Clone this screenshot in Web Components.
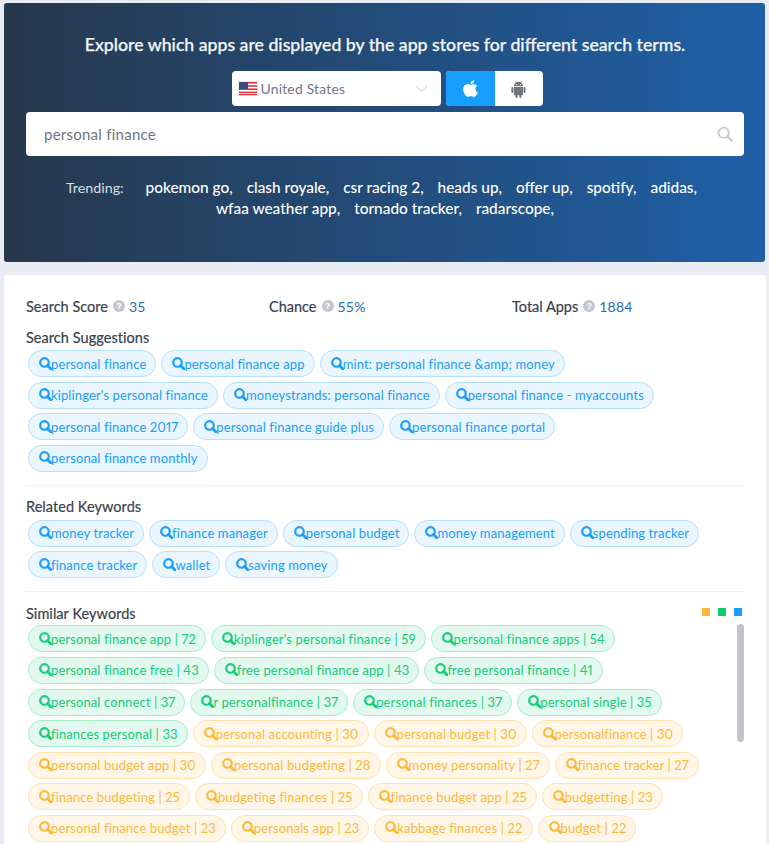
<!DOCTYPE html>
<html><head><meta charset="utf-8">
<style>
html,body{margin:0;padding:0;height:844px;overflow:hidden;background:#e9edf3;font-family:"Lato","Liberation Sans",sans-serif}
</style></head><body>
<app-page></app-page>
<script>
const SEARCH='<svg viewBox="0 0 14 14" width="13" height="13" fill="none" stroke="currentColor"><circle cx="5.9" cy="5.9" r="4.6" stroke-width="2.4"/><path d="M9.2 9.2L12.9 12.9" stroke-width="3" stroke-linecap="round"/></svg>';
class KwTag extends HTMLElement{
  constructor(){super();const s=this.attachShadow({mode:'open'});
  s.innerHTML=`<style>
  :host{display:inline-flex;align-items:center;box-sizing:border-box;height:27px;padding:0 9px 0 10px;border-radius:14px;border:1px solid var(--b);background:var(--bg);color:var(--c);font-size:13px;letter-spacing:.115px;font-variant-numeric:proportional-nums;white-space:nowrap;--b:#b5e0fd;--bg:#e9f6ff;--c:#1a9dfb}
  :host([tone=green]){--b:#a6ecc9;--bg:#e3f9ef;--c:#12cf78}
  :host([tone=orange]){--b:#ffe2ad;--bg:#fff6e7;--c:#fdb93c}
  svg{display:block;flex:none;margin:-1px -1px 0 0}
  </style>${SEARCH}<slot></slot>`}
}
customElements.define('kw-tag',KwTag);
class TagList extends HTMLElement{
  constructor(){super();const s=this.attachShadow({mode:'open'});
  s.innerHTML=`<style>:host{display:flex;flex-wrap:wrap;gap:4.6px 5px;padding:0 0 0 2px;width:708px}</style><slot></slot>`}
}
customElements.define('tag-list',TagList);
class StatItem extends HTMLElement{
  constructor(){super();const s=this.attachShadow({mode:'open'});
  s.innerHTML=`<style>:host{display:flex;align-items:center;box-sizing:border-box;padding-top:2px;height:20px;font-size:14.5px;color:#39424e;white-space:nowrap}
  i{display:inline-flex;width:12px;height:12px;border-radius:50%;background:#c3c7cc;color:#fff;font:700 9px/12px "Liberation Sans",sans-serif;align-items:center;justify-content:center;margin:0 4px 0 5px}
  b{font-weight:400;color:#2a6db0;font-size:14px;letter-spacing:.2px}
  span{font-weight:400;-webkit-text-stroke:.2px #39424e}</style><span><slot></slot></span><i>?</i><b></b>`;}
  connectedCallback(){this.shadowRoot.querySelector('b').textContent=this.getAttribute('value')}
}
customElements.define('stat-item',StatItem);
class HeroPanel extends HTMLElement{
  constructor(){super();const s=this.attachShadow({mode:'open'});
  s.innerHTML=`<style>
  :host{display:block;box-sizing:border-box;height:259px;margin:3px 4px 0 4px;border-radius:3px;background:linear-gradient(90deg,#27384c 0%,#1f60a8 100%);padding:31px 21px 0 22px;color:#fff}
  h1{margin:0;height:22px;font-size:17.7px;line-height:22px;font-weight:500;text-align:center;color:#f4f6f8;-webkit-text-stroke:.25px #f4f6f8}
  .ctl{display:flex;justify-content:center;gap:5px;margin-top:15px;height:35px;padding-left:4px}
  .sel{box-sizing:border-box;width:209px;height:35px;background:#fff;border-radius:4px;display:flex;align-items:center;padding:0 13px 0 6px;color:#6e7784;font-size:13.8px;letter-spacing:.25px;gap:3px}
  .sel span{flex:1}
  .btns{display:flex;width:97px;height:35px;border-radius:4px;overflow:hidden;background:#fff}
  .btns div{display:flex;align-items:center;justify-content:center}
  .a{width:49px;background:#189ffe}.g{width:48px}
  .search{box-sizing:border-box;height:44px;margin-top:6px;background:#fff;border-radius:4px;display:flex;align-items:center;justify-content:space-between;padding:0 11px 0 18px;color:#6e7682;font-size:15px;letter-spacing:.25px}
  .search svg{color:#c8ccd1}
  .tr{margin-top:21px;text-align:center;font-size:15.4px;line-height:21px;color:#fff;font-weight:500}
  .tr .l{color:#d6dde6;font-weight:400;margin-right:18px;font-size:14.3px}
  .tr span{margin-right:10px}
  .tr span.e1{margin-right:7px}
  .tr span.e2{margin-right:0}
  </style>
  <h1>Explore which apps are displayed by the app stores for different search terms.</h1>
  <div class="ctl">
   <div class="sel">
    <svg width="20" height="15" viewBox="0 0 20 15"><rect width="20" height="15" fill="#fff" stroke="#d8d8d8"/><g fill="#d8353f"><rect x="1" y="1" width="18" height="1.6"/><rect x="1" y="4.2" width="18" height="1.6"/><rect x="1" y="7.4" width="18" height="1.6"/><rect x="1" y="10.6" width="18" height="1.6"/><rect x="1" y="13" width="18" height="1.2"/></g><rect x="1" y="1" width="9" height="7" fill="#3b4a80"/></svg>
    <span>United States</span>
    <svg width="13" height="8" viewBox="0 0 13 8" fill="none" stroke="#c9ced4" stroke-width="1"><path d="M.7.8l5.8 6 5.8-6"/></svg>
   </div>
   <div class="btns">
    <div class="a"><svg width="15" height="19" viewBox="0 0 384 512" preserveAspectRatio="none" fill="#fff"><path d="M318.7 268.7c-.2-36.7 16.4-64.4 50-84.8-18.8-26.9-47.2-41.7-84.7-44.6-35.5-2.8-74.3 20.7-88.5 20.7-15 0-49.4-19.7-76.4-19.7C63.3 141.2 4 184.8 4 273.5q0 39.3 14.4 81.2c12.8 36.7 59 126.7 107.2 125.2 25.2-.6 43-17.9 75.8-17.9 31.8 0 48.3 17.9 76.4 17.9 48.6-.7 90.4-82.5 102.6-119.3-65.2-30.7-61.7-90-61.7-91.9zm-56.6-164.2c27.3-32.4 24.8-61.9 24-72.5-24.1 1.4-52 16.4-67.9 34.9-17.5 19.8-27.8 44.3-25.6 71.9 26.1 2 49.9-11.4 69.5-34.3z"/></svg></div>
    <div class="g"><svg width="15" height="18" viewBox="0 0 15 18" fill="#71767d"><path d="M3 6.2a4.5 4.5 0 0 1 9 0z"/><path d="M4.4 1l1.2 2M10.6 1L9.4 3" stroke="#71767d" stroke-width=".7"/><path d="M3 6.9h9v7.3a1 1 0 0 1-1 1H4a1 1 0 0 1-1-1z"/><rect x=".4" y="6.9" width="2" height="6" rx="1"/><rect x="12.6" y="6.9" width="2" height="6" rx="1"/><rect x="4.6" y="14" width="2" height="4" rx="1"/><rect x="8.4" y="14" width="2" height="4" rx="1"/><circle cx="5.6" cy="4.6" r=".5" fill="#fff"/><circle cx="9.4" cy="4.6" r=".5" fill="#fff"/></svg></div>
   </div>
  </div>
  <div class="search"><span>personal finance</span><svg viewBox="0 0 14 14" width="16" height="16" fill="none" stroke="currentColor"><circle cx="5.9" cy="5.9" r="4.5" stroke-width="1.7"/><path d="M9.2 9.2L12.8 12.8" stroke-width="2.2" stroke-linecap="round"/></svg></div>
  <div class="tr"><span class="l">Trending:</span> <span>pokemon go,</span> <span>clash royale,</span> <span>csr racing 2,</span> <span>heads up,</span> <span>offer up,</span> <span>spotify,</span> <span class="e1">adidas,</span><br><span>wfaa weather app,</span> <span>tornado tracker,</span> <span class="e2">radarscope,</span></div>`}
}
customElements.define('hero-panel',HeroPanel);
class SectionBlock extends HTMLElement{
  constructor(){super();const s=this.attachShadow({mode:'open'});
  s.innerHTML=`<style>:host{display:block}
  .h{display:flex;justify-content:space-between;align-items:center;box-sizing:border-box;padding-top:2px;height:20px;font-size:14.5px;color:#39424e;font-weight:400;-webkit-text-stroke:.2px #39424e;letter-spacing:.05px}
  </style>
  <div class="h"><slot name="title"></slot><slot name="aside"></slot></div><slot></slot>`}
}
customElements.define('section-block',SectionBlock);
class LegendDots extends HTMLElement{
  constructor(){super();const s=this.attachShadow({mode:'open'});
  s.innerHTML=`<style>:host{display:flex;gap:8px;margin:-3px 2px 0 0}i{width:8px;height:8px;display:block}</style><i style="background:#fdb93c"></i><i style="background:#0fcb6e"></i><i style="background:#189ffe"></i>`}
}
customElements.define('legend-dots',LegendDots);
class ScrollThumb extends HTMLElement{
  constructor(){super();this.attachShadow({mode:'open'}).innerHTML=`<style>:host{display:block;width:7px;height:118px;border-radius:4px;background:#c1c4ca;flex:none;margin-top:-1px}</style>`}
}
customElements.define('scroll-thumb',ScrollThumb);
class AppPage extends HTMLElement{
  constructor(){super();const s=this.attachShadow({mode:'open'});
  const mk=(a,t)=>a.map(x=>`<kw-tag${t?` tone="${t}"`:''}>${x}</kw-tag>`).join('');
  const sug=["personal finance","personal finance app","mint: personal finance &amp;amp; money","kiplinger's personal finance","moneystrands: personal finance","personal finance - myaccounts","personal finance 2017","personal finance guide plus","personal finance portal","personal finance monthly"];
  const rel=["money tracker","finance manager","personal budget","money management","spending tracker","finance tracker","wallet","saving money"];
  const gr=["personal finance app | 72","kiplinger's personal finance | 59","personal finance apps | 54","personal finance free | 43","free personal finance app | 43","free personal finance | 41","personal connect | 37","r personalfinance | 37","personal finances | 37","personal single | 35","finances personal | 33"];
  const or=["personal accounting | 30","personal budget | 30","personalfinance | 30","personal budget app | 30","personal budgeting | 28","money personality | 27","finance tracker | 27","finance budgeting | 25","budgeting finances | 25","finance budget app | 25","budgetting | 23","personal finance budget | 23","personals app | 23","kabbage finances | 22","budget | 22"];
  s.innerHTML=`<style>
  :host{display:block}
  .card{margin:13px 3px 0 4px;background:#fff;border-radius:3px 3px 0 0;padding:20px 22px 0;height:600px;box-sizing:border-box}
  .stats{display:grid;grid-template-columns:243px 243px 1fr;height:20px}
  hr{border:0;border-top:1px solid #f0f2f4;margin:0}
  .row{display:flex;justify-content:space-between;align-items:flex-start;margin-top:3px}
  section-block>tag-list{margin-top:4px}
  </style>
  <hero-panel></hero-panel>
  <div class="card">
   <div class="stats"><stat-item value="35">Search Score</stat-item><stat-item value="55%">Chance</stat-item><stat-item value="1884">Total Apps</stat-item></div>
   <section-block style="margin-top:11px"><span slot="title">Search Suggestions</span>
    <tag-list>${mk(sug)}</tag-list></section-block>
   <hr style="margin-top:13px">
   <section-block style="margin-top:10px"><span slot="title">Related Keywords</span>
    <tag-list>${mk(rel)}</tag-list></section-block>
   <hr style="margin-top:13px">
   <section-block style="margin-top:10px"><span slot="title">Similar Keywords</span><legend-dots slot="aside"></legend-dots>
    <div class="row"><tag-list>${mk(gr,'green')}${mk(or,'orange')}</tag-list><scroll-thumb></scroll-thumb></div></section-block>
  </div>`}
}
customElements.define('app-page',AppPage);
</script>
</body></html>
